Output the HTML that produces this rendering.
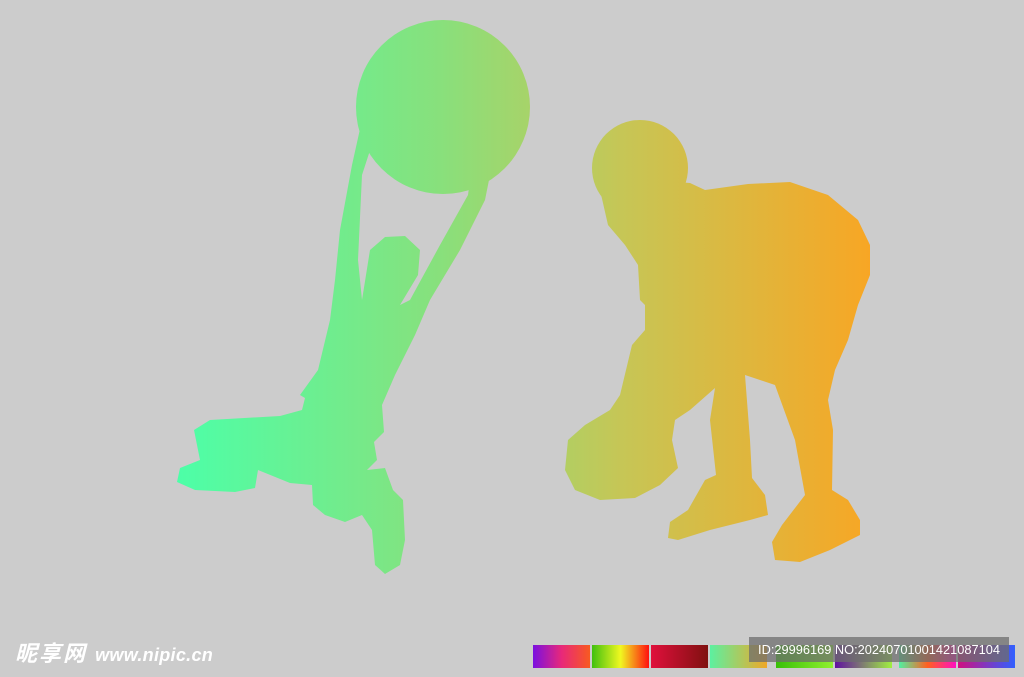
<!DOCTYPE html>
<html><head><meta charset="utf-8"><style>
html,body{margin:0;padding:0;background:#cccccc;width:1024px;height:677px;overflow:hidden;position:relative;font-family:"Liberation Sans",sans-serif}
.sw{position:absolute;top:645px;height:23px;width:57px}
#logo{position:absolute;left:15px;top:636px;color:#fff;font-size:22px;font-weight:bold;font-style:italic;font-family:"Liberation Sans","Noto Sans CJK SC",sans-serif;letter-spacing:2px}
#logo span{font-size:18px;letter-spacing:0.3px}
#id{position:absolute;left:749px;top:637px;width:260px;height:25px;background:rgba(110,110,110,.75);color:#fff;font-size:12.8px;line-height:25px;text-align:center;white-space:nowrap}
</style></head><body>
<svg width="1024" height="677" style="position:absolute;left:0;top:0">
<defs><linearGradient id="g" gradientUnits="userSpaceOnUse" x1="175" y1="0" x2="872" y2="0">
<stop offset="0" stop-color="#4cffa8"/><stop offset="0.38" stop-color="#88e07c"/><stop offset="0.64" stop-color="#c6c656"/><stop offset="1" stop-color="#f8a624"/></linearGradient></defs>
<g fill="url(#g)">
<circle cx="443" cy="107" r="87"/>
<path d="M362 120 L375 135 L362 175 L358 260 L362 300 L370 250 L385 237 L405 236 L420 250 L418 275 L400 305 L410 300 L440 245 L468 195 L470 180 L492 165 L485 200 L460 250 L430 300 L415 335 L395 375 L382 405 L384 432 L374 442 L377 460 L367 470 L385 468 L393 490 L403 500 L405 540 L400 565 L385 574 L375 565 L372 530 L362 515 L345 522 L325 515 L313 505 L312 485 L290 483 L258 470 L255 488 L235 492 L195 490 L177 482 L180 468 L200 460 L194 430 L210 420 L280 416 L302 410 L305 398 L300 395 L318 370 L330 320 L335 280 L340 230 L352 165 Z"/>
<circle cx="640" cy="168" r="48"/>
<path d="M595 160 L600 190 L608 225 L625 245 L638 265 L640 300 L645 305 L645 330 L632 345 L620 395 L610 410 L585 425 L568 440 L565 470 L575 490 L600 500 L635 498 L660 485 L678 468 L672 440 L675 420 L690 410 L715 388 L710 420 L716 475 L705 480 L688 510 L670 522 L668 538 L678 540 L710 530 L750 520 L768 515 L765 495 L752 478 L750 440 L745 375 L775 385 L795 440 L805 495 L782 525 L772 542 L775 560 L800 562 L830 550 L860 535 L860 520 L848 500 L832 490 L833 430 L828 400 L835 370 L848 340 L858 305 L870 275 L870 245 L858 220 L828 195 L790 182 L748 184 L705 190 L690 183 L650 180 Z"/>
</g></svg>
<div class="sw" style="left:533px;background:linear-gradient(90deg,#7a10e0,#e8287a,#f85a20)"></div>
<div class="sw" style="left:592px;background:linear-gradient(90deg,#40c010,#f0f820,#ff1010)"></div>
<div class="sw" style="left:651px;background:linear-gradient(90deg,#e0103c,#801010)"></div>
<div class="sw" style="left:710px;background:linear-gradient(90deg,#5cf0a0,#f0a828)"></div>
<div class="sw" style="left:776px;background:linear-gradient(90deg,#38c008,#90f030)"></div>
<div class="sw" style="left:835px;background:linear-gradient(90deg,#6010a0,#a0f040)"></div>
<div class="sw" style="left:899px;background:linear-gradient(90deg,#50f0a0,#ff6020,#ff10c0)"></div>
<div class="sw" style="left:958px;background:linear-gradient(90deg,#d01080,#3060ff)"></div>
<div id="logo">昵享网 <span>www.nipic.cn</span></div>
<div id="id">ID:29996169 NO:20240701001421087104</div>
</body></html>
